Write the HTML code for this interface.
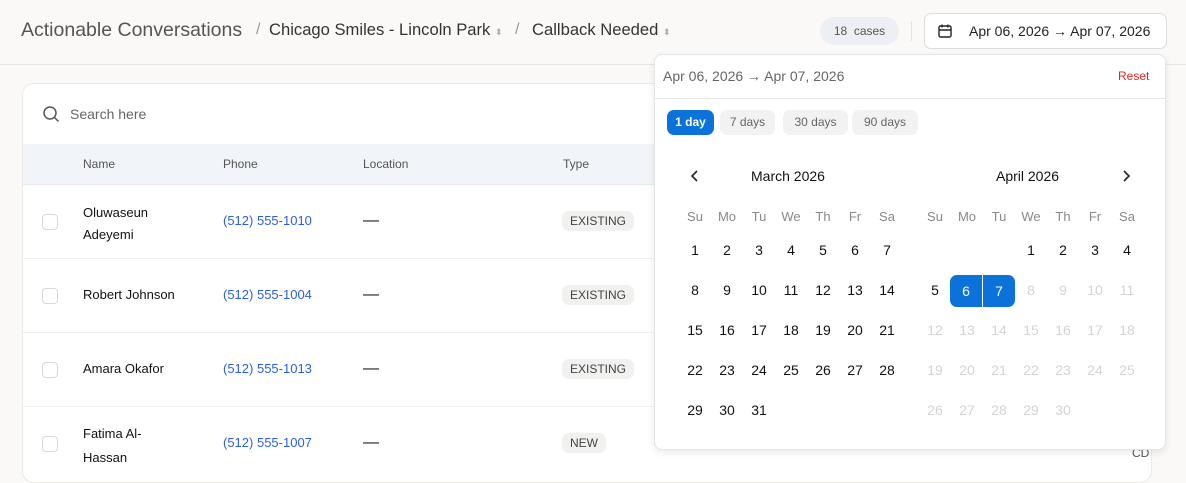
<!DOCTYPE html><html><head><style>
*{box-sizing:border-box;margin:0;padding:0}
body{width:1186px;height:474px;overflow:hidden;background:#faf9f7;font-family:"Liberation Sans",sans-serif;position:relative;color:#111}
.a{position:absolute;white-space:nowrap}
.hdr{position:absolute;left:0;top:0;width:1186px;height:65px;border-bottom:1px solid #e8e6e2}
.card{position:absolute;left:22px;top:83px;width:1130px;height:400px;background:#fff;border:1px solid #eceae6;border-radius:12px;overflow:hidden}
.th{position:absolute;left:0;top:60px;width:100%;height:41px;background:#f1f4f8;border-bottom:1px solid #e8eaee}
.row{position:absolute;left:0;width:100%;border-bottom:1px solid #eeeeee}
.cb{position:absolute;left:19px;width:16px;height:16px;border:1px solid #d8d8d8;border-radius:4px;background:#fff}
.tag{position:absolute;left:539px;height:20px;padding:0 8px;border-radius:7px;background:#f1f1ef;font-size:12px;line-height:20px;color:#444}
.ph{color:#2b5fe0;font-size:13px}
.pop{position:absolute;left:654px;top:54px;width:512px;height:396px;background:#fff;border:1px solid #e4e4e4;border-radius:8px;box-shadow:0 3px 8px rgba(0,0,0,.08)}
.pre{position:absolute;top:55px;height:25px;border-radius:7px;background:#f2f2f2;color:#666;font-size:12px;line-height:25px;text-align:center}
.d{position:absolute;width:32px;text-align:center;font-size:14px;transform:translateX(-16px)}
.wd{color:#888;font-size:13px}
.dim{color:#d4d4d4}
.sel{position:absolute;top:220px;width:32px;height:32px;background:#0a72d8;color:#fff;font-size:14px;line-height:32px;text-align:center}
</style></head><body>
<div class="hdr"></div>
<div class="a" style="left:21px;top:19px;font-size:19.5px;color:#555">Actionable Conversations</div>
<div class="a" style="left:256px;top:21px;font-size:16px;color:#999">/</div>
<div class="a" style="left:269px;top:20px;font-size:16.6px;color:#333">Chicago Smiles - Lincoln Park <span style="font-size:9px;color:#aaa">⬍</span></div>
<div class="a" style="left:515px;top:21px;font-size:16px;color:#999">/</div>
<div class="a" style="left:532px;top:20px;font-size:16.6px;color:#333">Callback Needed <span style="font-size:9px;color:#aaa">⬍</span></div>
<div class="a" style="left:820px;top:17px;width:79px;height:28px;border-radius:14px;background:#eceff3;font-size:12px;line-height:28px;text-align:center;color:#555">18&nbsp; cases</div>
<div class="a" style="left:911px;top:21px;width:1px;height:20px;background:#e2e2e2"></div>
<div class="a" style="left:924px;top:13px;width:243px;height:36px;border:1px solid #dcdcdc;border-radius:7px;background:#fff"></div>
<svg class="a" style="left:937px;top:23px" width="16" height="16" viewBox="0 0 16 16" fill="none" stroke="#222" stroke-width="1.4"><rect x="2" y="3" width="12" height="11" rx="1.5"/><path d="M2 7h12M5 1.5v3M11 1.5v3"/></svg>
<div class="a" style="left:969px;top:23px;font-size:14px;color:#222">Apr 06, 2026 → Apr 07, 2026</div>

<div class="card">
<svg class="a" style="left:19px;top:21px" width="18" height="18" viewBox="0 0 18 18" fill="none" stroke="#555" stroke-width="1.5"><circle cx="8" cy="8" r="6"/><path d="M12.5 12.5l4 4"/></svg>
<div class="a" style="left:47px;top:22px;font-size:14px;color:#666">Search here</div>
<div class="th"></div>
<div class="a" style="left:60px;top:73px;font-size:12px;color:#555">Name</div>
<div class="a" style="left:200px;top:73px;font-size:12px;color:#555">Phone</div>
<div class="a" style="left:340px;top:73px;font-size:12px;color:#555">Location</div>
<div class="a" style="left:540px;top:73px;font-size:12px;color:#555">Type</div>
<div class="row" style="top:101px;height:74px"><div class="cb" style="top:29px"></div><div class="a" style="left:60px;top:17px;font-size:13px;line-height:22px">Oluwaseun<br>Adeyemi</div><div class="a ph" style="left:200px;top:28px">(512) 555-1010</div><div class="a" style="left:340px;top:27px">—</div><div class="tag" style="top:26px">EXISTING</div></div>
<div class="row" style="top:175px;height:74px"><div class="cb" style="top:29px"></div><div class="a" style="left:60px;top:28px;font-size:13px">Robert Johnson</div><div class="a ph" style="left:200px;top:28px">(512) 555-1004</div><div class="a" style="left:340px;top:27px">—</div><div class="tag" style="top:26px">EXISTING</div></div>
<div class="row" style="top:249px;height:74px"><div class="cb" style="top:29px"></div><div class="a" style="left:60px;top:28px;font-size:13px">Amara Okafor</div><div class="a ph" style="left:200px;top:28px">(512) 555-1013</div><div class="a" style="left:340px;top:27px">—</div><div class="tag" style="top:26px">EXISTING</div></div>
<div class="row" style="top:323px;height:80px;border:none"><div class="cb" style="top:29px"></div><div class="a" style="left:60px;top:15px;font-size:13px;line-height:24px">Fatima Al-<br>Hassan</div><div class="a ph" style="left:200px;top:28px">(512) 555-1007</div><div class="a" style="left:340px;top:27px">—</div><div class="tag" style="top:26px">NEW</div></div>
<div class="a" style="left:1109px;top:362px;font-size:12px;color:#555">CD</div>
</div>

<div class="pop">
<div class="a" style="left:8px;top:13px;font-size:14px;color:#666">Apr 06, 2026 → Apr 07, 2026</div>
<div class="a" style="left:463px;top:14px;font-size:12px;color:#e02424">Reset</div>
<div class="a" style="left:0;top:43px;width:510px;height:1px;background:#e6e6e6"></div>
<div class="pre" style="left:12px;width:47px;background:#0a72d8;color:#fff;font-weight:bold">1 day</div>
<div class="pre" style="left:65px;width:55px">7 days</div>
<div class="pre" style="left:128px;width:65px">30 days</div>
<div class="pre" style="left:197px;width:66px">90 days</div>
<svg class="a" style="left:35px;top:115px" width="10" height="12" viewBox="0 0 10 12" fill="none" stroke="#222" stroke-width="1.6"><path d="M7 1L2 6l5 5"/></svg>
<div class="a" style="left:96px;top:113px;font-size:14px">March 2026</div>
<div class="a" style="left:341px;top:113px;font-size:14px">April 2026</div>
<svg class="a" style="left:466px;top:115px" width="10" height="12" viewBox="0 0 10 12" fill="none" stroke="#222" stroke-width="1.6"><path d="M3 1l5 5-5 5"/></svg>
<div class="sel" style="left:295px;border-radius:7px 0 0 7px">6</div>
<div class="sel" style="left:328px;border-radius:0 7px 7px 0">7</div>
<div id="cal"></div>
</div>
<script>
var c=document.getElementById('cal'),h='';
var wd=['Su','Mo','Tu','We','Th','Fr','Sa'];
var mx=[40,72,104,136,168,200,232],ax=[280,312,344,376,408,440,472];
var ys=[154,187,227,267,307,347];
for(var i=0;i<7;i++){h+='<div class="a d wd" style="left:'+mx[i]+'px;top:'+ys[0]+'px">'+wd[i]+'</div><div class="a d wd" style="left:'+ax[i]+'px;top:'+ys[0]+'px">'+wd[i]+'</div>';}
for(var d=1;d<=31;d++){var p=d-1;h+='<div class="a d" style="left:'+mx[p%7]+'px;top:'+ys[1+Math.floor(p/7)]+'px">'+d+'</div>';}
for(var d=1;d<=30;d++){if(d==6||d==7)continue;var p=d+2;h+='<div class="a d'+(d>7?' dim':'')+'" style="left:'+ax[p%7]+'px;top:'+ys[1+Math.floor(p/7)]+'px">'+d+'</div>';}
c.innerHTML=h;
</script>
</body></html>
